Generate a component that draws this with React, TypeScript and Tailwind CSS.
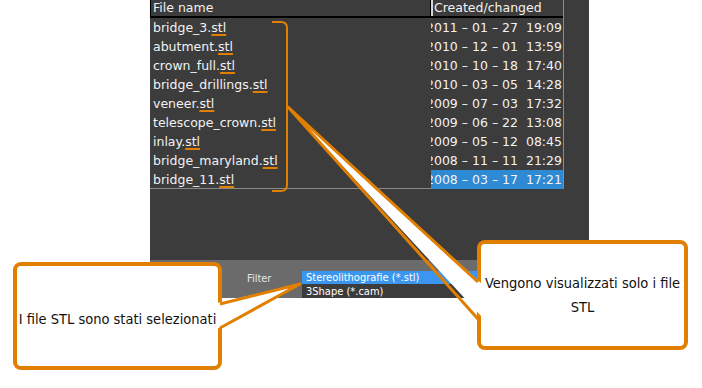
import React from "react";

const files = [
  ["bridge_3", "2011 – 01 – 27  19:09"],
  ["abutment", "2010 – 12 – 01  13:59"],
  ["crown_full", "2010 – 10 – 18  17:40"],
  ["bridge_drillings", "2010 – 03 – 05  14:28"],
  ["veneer", "2009 – 07 – 03  17:32"],
  ["telescope_crown", "2009 – 06 – 22  13:08"],
  ["inlay", "2009 – 05 – 12  08:45"],
  ["bridge_maryland", "2008 – 11 – 11  21:29"],
  ["bridge_11", "2008 – 03 – 17  17:21"],
];

const OR = "#e07f00";

export default function App() {
  return (
    <div className="relative w-[702px] h-[388px] bg-white overflow-hidden">
      <div className="ml-[150px] w-[439px]">
        <div className="h-[260px] bg-[#3c3c3c] text-[#f2f2f2] text-[12.5px] leading-none [font-family:'DejaVu_Sans',sans-serif]">
          <div className="w-[414px] h-[189px] border-r border-b border-[#8a8a8a]">
            <div className="flex h-[18px] border-b-2 border-black">
              <div className="w-[280px] border-l border-black pl-[2px] pt-[2px]">File name</div>
              <div className="flex-1 border-l border-black">
                <div className="h-full border-l-2 border-[#d8d8d8] pl-[1px] pt-[2px]">Created/changed</div>
              </div>
            </div>
            {files.map(([name, date], i) => (
              <div key={name} className="flex h-[19px] items-center">
                <div className="w-[281px] pl-[3px] pt-[1px] whitespace-nowrap">
                  {name}.
                  <span className="underline decoration-2 underline-offset-[2px] [text-decoration-color:#e07f00]">stl</span>
                </div>
                <div
                  className={
                    "flex-1 h-full flex items-center justify-end overflow-hidden whitespace-pre pr-[1px] pt-[1px] " +
                    (i === files.length - 1 ? "bg-[#2d8ad3]" : "")
                  }
                >
                  <span className="shrink-0">{date}</span>
                </div>
              </div>
            ))}
          </div>
        </div>
        <div className="h-[38px] bg-[#6b6b6b] flex text-[11px] leading-none [font-family:'DejaVu_Sans_Condensed','DejaVu_Sans',sans-serif]">
          <div className="w-[152px] pl-[97px] pt-[13px] text-[#e4e4e4]">Filter</div>
          <div className="mt-[11px] flex-1 mr-[8px] bg-[#3c3c3c] text-white">
            <div className="h-[13px] bg-[#3b96ef] pl-[4px] pt-[1px]">Stereolithografie (*.stl)</div>
            <div className="h-[14px] pl-[4px] pt-[2px]">3Shape (*.cam)</div>
          </div>
        </div>
      </div>

      <div className="absolute left-[13px] top-[262px] w-[209px] h-[108px] z-10 bg-white border-4 border-[#e07f00] rounded-[8px] flex items-center justify-center pt-[7px] whitespace-nowrap text-[14.5px] text-[#111] [font-family:'DejaVu_Sans_Condensed','DejaVu_Sans',sans-serif]">
        I file STL sono stati selezionati
      </div>

      <div className="absolute left-[477px] top-[240px] w-[211px] h-[110px] z-10 bg-white border-4 border-[#e07f00] rounded-[8px] flex items-center justify-center text-center leading-[24px] text-[14.5px] text-[#111] [font-family:'DejaVu_Sans_Condensed','DejaVu_Sans',sans-serif]">
        <div>
          Vengono visualizzati solo i file
          <br />
          STL
        </div>
      </div>

      <svg className="absolute left-0 top-0 z-20 pointer-events-none" width="702" height="388" viewBox="0 0 702 388">
        <path d="M272,22 H281 Q287,22 287,28 V185 Q287,191 281,191 H272" fill="none" stroke={OR} strokeWidth="2" />
        <polygon points="288,107 482,284 482,317" fill="white" />
        <polyline points="478,282 288,107 478,319" fill="none" stroke={OR} strokeWidth="3" strokeLinejoin="round" />
        <polygon points="217,303 300,284 217,329" fill="white" />
        <polyline points="220,304 300,284 220,328" fill="none" stroke={OR} strokeWidth="3" strokeLinejoin="round" />
      </svg>
    </div>
  );
}
